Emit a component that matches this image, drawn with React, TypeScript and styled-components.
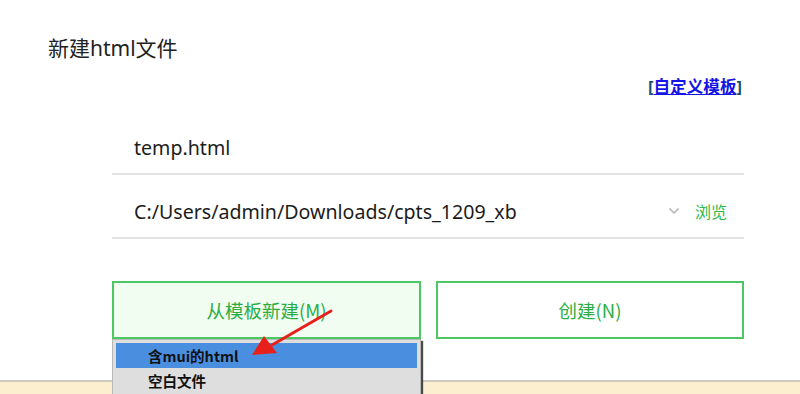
import React from "react";
import styled, { createGlobalStyle } from "styled-components";

const Global = createGlobalStyle`
  html, body { margin: 0; padding: 0; background: #ffffff; }
  body { font-family: "Noto Sans", "Noto Sans CJK SC", sans-serif; }
`;

const Page = styled.div`
  position: relative;
  width: 800px;
  height: 394px;
  overflow: hidden;
  display: flex;
  flex-direction: column;
  background: #fff;
  font-family: "Noto Sans", "Noto Sans CJK SC", sans-serif;
`;

const Title = styled.div`
  margin: 34px 0 0 48px;
  line-height: 28px;
  font-size: 21px;
  color: #222;
`;

const LinkRow = styled.div`
  display: flex;
  justify-content: flex-end;
  margin-top: 15px;
  padding-right: 58px;
  line-height: 20px;
  font-size: 16.6px;
  font-weight: 700;
  color: #1a4f6e;
`;

const TemplateLink = styled.a`
  color: #1414e6;
  text-decoration: underline;
  cursor: pointer;
`;

const Form = styled.div`
  margin: 14px 56px 0 112px;
  display: flex;
  flex-direction: column;
`;

const Field = styled.div`
  box-sizing: border-box;
  height: 64px;
  border-bottom: 2px solid #e2e2e2;
  display: flex;
  align-items: flex-end;
  padding: 0 17px 13px 22px;
`;

const FieldText = styled.div`
  flex: 1;
  line-height: 24px;
  font-size: 19.6px;
  color: #1c1c1c;
  white-space: nowrap;
`;

const Chevron = styled.svg`
  width: 12px;
  height: 8px;
  margin: 0 15px 9px 0;
`;

const Browse = styled.span`
  line-height: 24px;
  font-size: 16px;
  color: #2fb84a;
`;

const ButtonRow = styled.div`
  margin: 42px 56px 0 112px;
  display: grid;
  grid-template-columns: 309px 308px;
  column-gap: 15px;
`;

const Slot = styled.div`
  position: relative;
`;

const Button = styled.button<{ $tinted?: boolean }>`
  width: 100%;
  height: 58px;
  border: 2px solid #4cc764;
  background: ${(p) => (p.$tinted ? "#f2fdf2" : "#ffffff")};
  color: #2aae44;
  font-family: "Noto Sans CJK SC", "Noto Sans", sans-serif;
  font-size: 18.5px;
  padding: 0;
  cursor: pointer;
`;

const Menu = styled.div`
  position: absolute;
  top: 58px;
  left: 0;
  width: 309px;
  box-sizing: border-box;
  padding: 3px 3px 0 3px;
  background: #dedede;
  border: 1px solid #b8b8b8;
  box-shadow: 2px 2px 1px #4a4a4a;
  z-index: 5;
  height: 80px;
`;

const MenuItem = styled.div<{ $active?: boolean }>`
  height: 25px;
  line-height: 25px;
  padding-left: 32px;
  font-family: "Noto Sans CJK SC", "Noto Sans", sans-serif;
  font-size: 14.5px;
  font-weight: 700;
  color: #111;
  background: ${(p) => (p.$active ? "#4a8ee0" : "transparent")};
`;

const Spacer = styled.div`
  flex: 1;
`;

const Footer = styled.div`
  height: 12px;
  border-top: 2px solid #cfcac0;
  background: #fcefcf;
`;

const Arrow = styled.svg`
  position: absolute;
  left: 240px;
  top: 300px;
  width: 100px;
  height: 70px;
  z-index: 10;
  pointer-events: none;
`;

export default function App() {
  return (
    <Page>
      <Global />
      <Title>新建html文件</Title>
      <LinkRow>
        [<TemplateLink>自定义模板</TemplateLink>]
      </LinkRow>
      <Form>
        <Field>
          <FieldText>temp.html</FieldText>
        </Field>
        <Field>
          <FieldText>C:/Users/admin/Downloads/cpts_1209_xb</FieldText>
          <Chevron viewBox="0 0 12 8">
            <path d="M1.5 1.5 L6 6 L10.5 1.5" fill="none" stroke="#b0b0b0" strokeWidth="1.5" />
          </Chevron>
          <Browse>浏览</Browse>
        </Field>
      </Form>
      <ButtonRow>
        <Slot>
          <Button $tinted>从模板新建(M)</Button>
          <Menu>
            <MenuItem $active>含mui的html</MenuItem>
            <MenuItem>空白文件</MenuItem>
          </Menu>
        </Slot>
        <Slot>
          <Button>创建(N)</Button>
        </Slot>
      </ButtonRow>
      <Spacer />
      <Footer />
      <Arrow viewBox="240 300 100 70">
        <line x1="331" y1="311" x2="272" y2="345" stroke="#e8201c" strokeWidth="3" strokeLinecap="round" />
        <polygon points="252,355 264,336 277,353" fill="#e8201c" />
      </Arrow>
    </Page>
  );
}
